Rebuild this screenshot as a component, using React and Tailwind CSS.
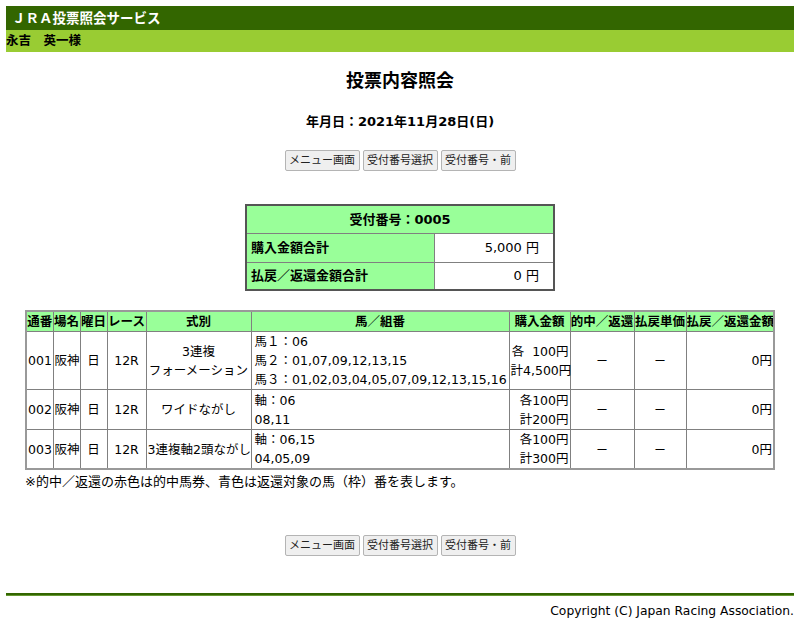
import React from 'react';

const font = '"DejaVu Sans", "Noto Sans CJK JP", sans-serif';

function Buttons() {
  const labels = ['メニュー画面', '受付番号選択', '受付番号・前'];
  return (
    <div className="flex justify-center gap-[3px]">
      {labels.map((l) => (
        <button
          key={l}
          className="h-[21px] w-[75px] border border-[#b4b4b4] bg-[#efefef] text-[11px] leading-none text-[#222] rounded-[2px]"
        >
          {l}
        </button>
      ))}
    </div>
  );
}

const rows = [
  {
    no: '001',
    kind: ['3連複', 'フォーメーション'],
    horses: ['馬１：06', '馬２：01,07,09,12,13,15', '馬３：01,02,03,04,05,07,09,12,13,15,16'],
    amount: ['各  100円', '計4,500円'],
    h: 'h-[58px]',
  },
  { no: '002', kind: ['ワイドながし'], horses: ['軸：06', '08,11'], amount: ['各100円', '計200円'], h: 'h-[40px]' },
  { no: '003', kind: ['3連複軸2頭ながし'], horses: ['軸：06,15', '04,05,09'], amount: ['各100円', '計300円'], h: 'h-[39px]' },
];

export default function App() {
  const th = 'border border-[#808080] bg-[#99ff99] font-bold px-0 whitespace-nowrap overflow-hidden';
  const td = 'border border-[#808080] px-[1px] whitespace-nowrap';
  return (
    <div className="px-[6px] pt-[6px] text-black bg-white min-h-[627px]" style={{ fontFamily: font }}>
      <div className="h-[24px] bg-[#336600] text-white font-bold text-[13.5px] leading-[24px] pl-[6px]">
        ＪＲＡ投票照会サービス
      </div>
      <div className="h-[22px] bg-[#99cc33] text-[12.5px] font-bold leading-[22px]">永吉　英一様</div>

      <h1 className="mt-[17px] text-center text-[18px] font-bold leading-[24px]">投票内容照会</h1>
      <div className="mt-[20px] text-center text-[13px] font-bold leading-[18px]">年月日：2021年11月28日(日)</div>

      <div className="mt-[19px]">
        <Buttons />
      </div>

      <table className="mx-auto mt-[33px] border-collapse border-2 border-[#555] text-[13px] w-[310px]">
        <tbody>
          <tr className="h-[28px]">
            <td colSpan={2} className="border border-[#808080] bg-[#99ff99] text-center font-bold">
              受付番号：0005
            </td>
          </tr>
          <tr className="h-[29px]">
            <td className="border border-[#808080] bg-[#99ff99] font-bold pl-[4px] w-[188px]">購入金額合計</td>
            <td className="border border-[#808080] text-right pr-[14px]">5,000 円</td>
          </tr>
          <tr className="h-[28px]">
            <td className="border border-[#808080] bg-[#99ff99] font-bold pl-[4px]">払戻／返還金額合計</td>
            <td className="border border-[#808080] text-right pr-[14px]">0 円</td>
          </tr>
        </tbody>
      </table>

      <table className="ml-[19px] mt-[19px] table-fixed border-collapse border-2 border-[#999] text-[12.5px] leading-[19px] w-[750px]">
        <thead>
          <tr className="h-[20px]">
            <th className={`${th} w-[27px]`}>通番</th>
            <th className={`${th} w-[27px]`}>場名</th>
            <th className={`${th} w-[27px]`}>曜日</th>
            <th className={`${th} w-[39px]`}>レース</th>
            <th className={`${th} w-[105px]`}>式別</th>
            <th className={`${th} w-[258px]`}>馬／組番</th>
            <th className={`${th} w-[61px]`}>購入金額</th>
            <th className={`${th} w-[64px]`}>的中／返還</th>
            <th className={`${th} w-[52px]`}>払戻単価</th>
            <th className={th}>払戻／返還金額</th>
          </tr>
        </thead>
        <tbody>
          {rows.map((r) => (
            <tr key={r.no} className={r.h}>
              <td className={td}>{r.no}</td>
              <td className={td}>阪神</td>
              <td className={`${td} text-center`}>日</td>
              <td className={`${td} text-center`}>12R</td>
              <td className={`${td} text-center`}>
                {r.kind.map((k) => (
                  <div key={k}>{k}</div>
                ))}
              </td>
              <td className={`${td} text-left pl-[3px]`}>
                {r.horses.map((k) => (
                  <div key={k}>{k}</div>
                ))}
              </td>
              <td className={`${td} text-right`}>
                {r.amount.map((k) => (
                  <div key={k} className="whitespace-pre">{k}</div>
                ))}
              </td>
              <td className={`${td} text-center`}>－</td>
              <td className={`${td} text-center`}>－</td>
              <td className={`${td} text-right`}>0円</td>
            </tr>
          ))}
        </tbody>
      </table>
      <div className="ml-[19px] mt-[3px] text-[13px] leading-[18px]">
        ※的中／返還の赤色は的中馬券、青色は返還対象の馬（枠）番を表します。
      </div>

      <div className="mt-[44px]">
        <Buttons />
      </div>

      <div className="mt-[37px] h-[3px] bg-[#336600] border-b border-[#669933]" />
      <div className="mt-[6px] text-right text-[12.3px] leading-[18px]">Copyright (C) Japan Racing Association.</div>
    </div>
  );
}
